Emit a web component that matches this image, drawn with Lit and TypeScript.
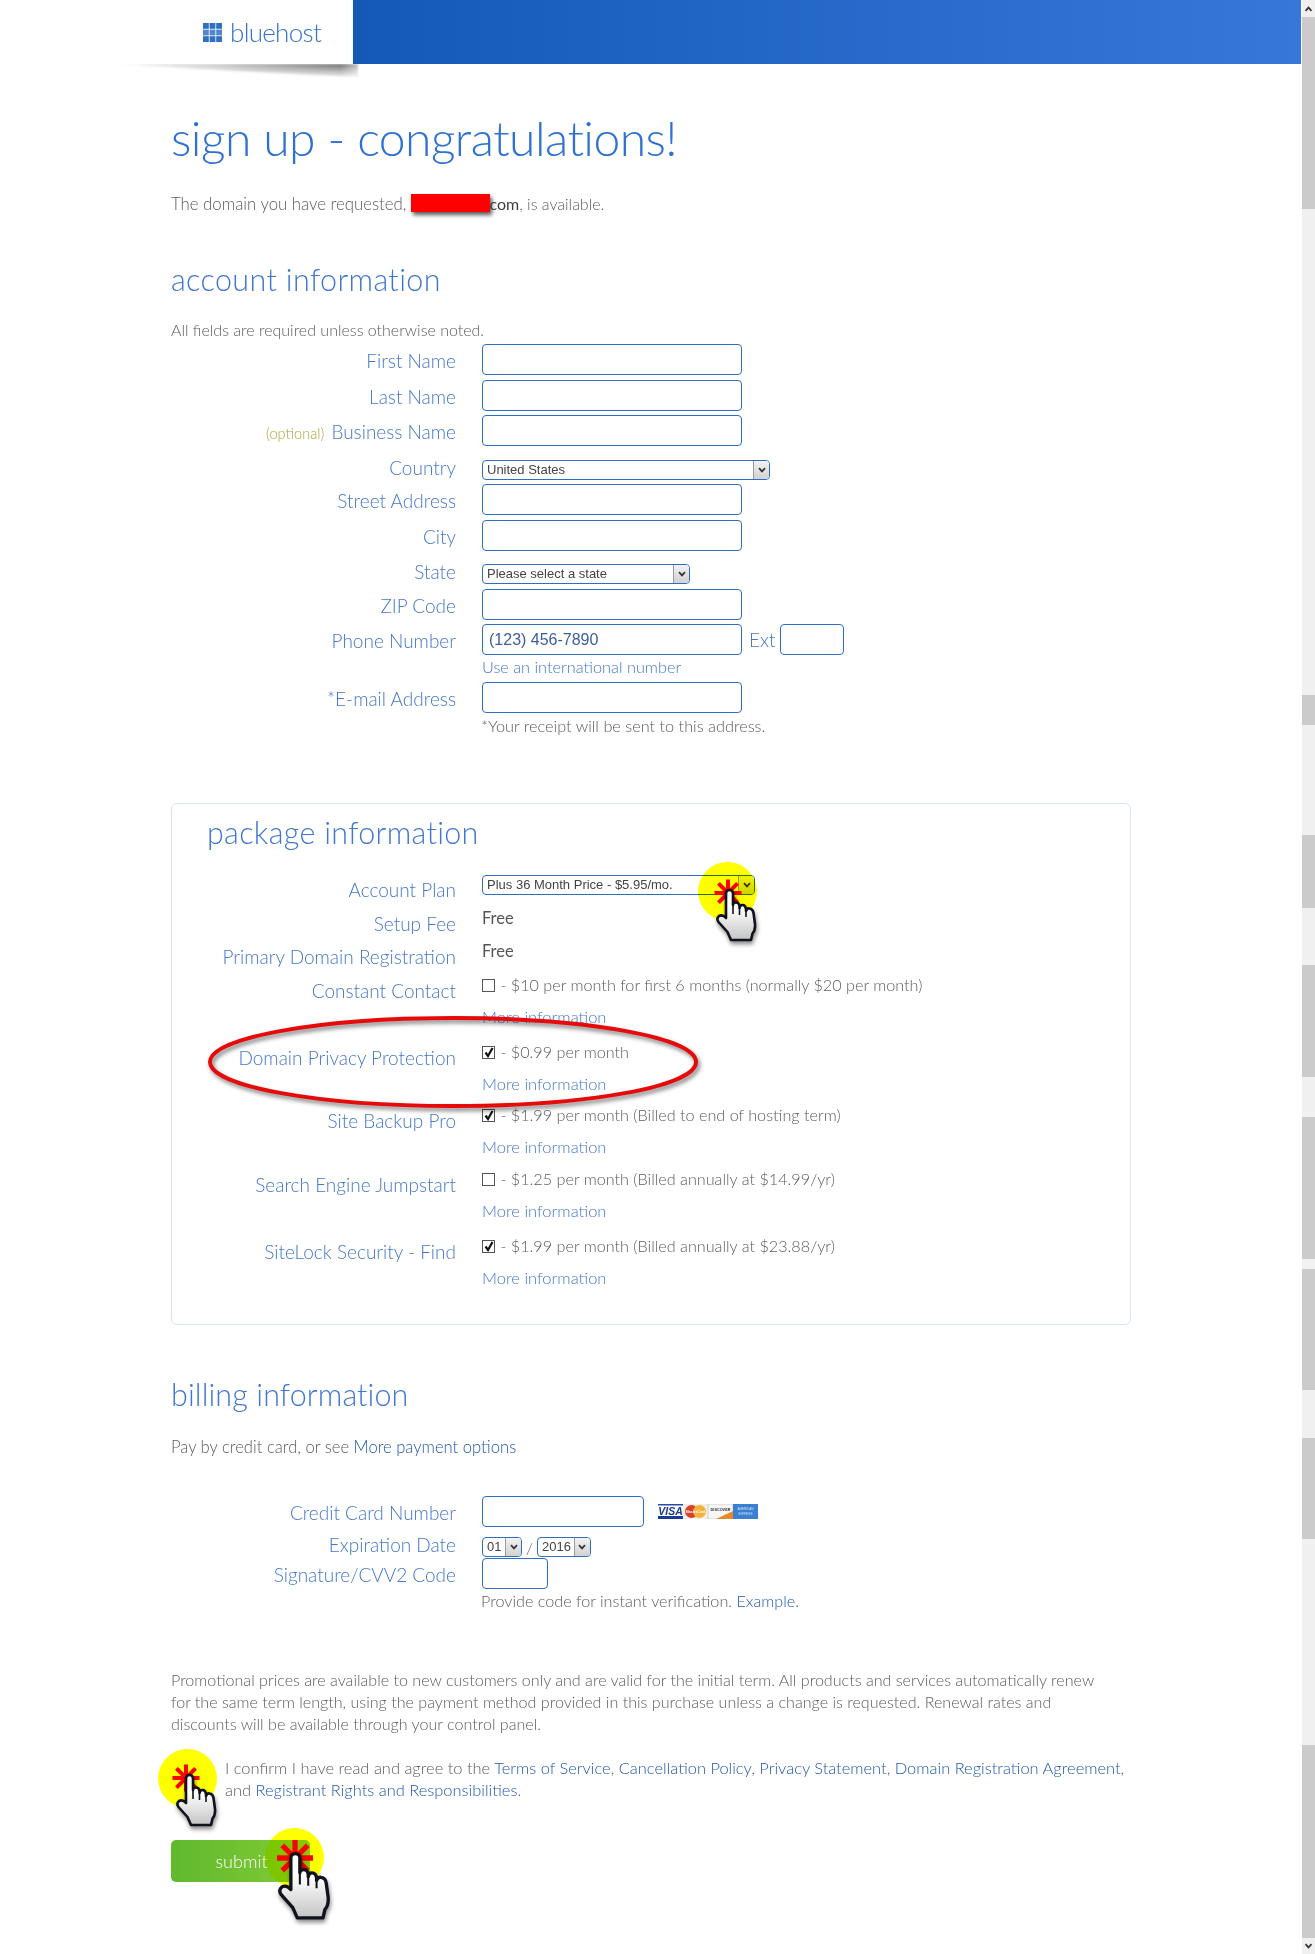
import { LitElement, html, css, svg } from "lit";
import { customElement } from "lit/decorators.js";

const SCROLL: [string, number][] = [
  ["arrow up", 17], ["thumb", 192], ["track", 486], ["thumb", 30], ["track", 110], ["thumb", 73],
  ["track", 57], ["thumb", 112], ["track", 40], ["thumb", 142], ["track", 10], ["thumb", 121],
  ["track", 48], ["thumb", 101], ["track", 206], ["thumb", 193], ["arrow down", 16],
];

const chevron = (cls = "chev") => html`<svg class=${cls} viewBox="0 0 8 6"><path d="M1 1.2 L4 4.4 L7 1.2" fill="none" stroke="#333" stroke-width="1.7"/></svg>`;

const select = (label: string, cls: string) => html`<div class="select ${cls}"><span>${label}</span><i>${chevron()}</i></div>`;

const hand = () => html`<svg class="hand" viewBox="-2 0 44 56">
  <defs><linearGradient id="hg" x1="0" y1="0" x2="0" y2="1"><stop offset="0.35" stop-color="#fff"/><stop offset="1" stop-color="#c4c4c4"/></linearGradient></defs>
  <path d="M9 27 L9 5.5 Q9 2 12.5 2 Q16 2 16 5.5 L16 17 Q16 14.5 19 14.5 Q22 14.5 22.5 18 L22.5 20 Q23 17 25.5 17 Q28.5 17 29 21 L29 23 Q30 20 32.5 20.5 Q36 21 36.5 25 L38 36 Q38.5 42 35.5 45.5 L34 52 L14 52 L10.5 44 L1.5 34 Q-1 30.5 2 28 Q5.5 26 9 30 Z" fill="url(#hg)" stroke="#10131c" stroke-width="2.6" stroke-linejoin="round"/>
  <path d="M16 17 L16 26 M22.5 20 L22.5 27 M29 23 L29 29" stroke="#10131c" stroke-width="1.6" fill="none"/>
</svg>`;

const asterisk = (cls: string) => html`<svg class="star ${cls}" viewBox="-15 -15 30 30">
  ${[0, 45, 90, 135].map((a) => svg`<line x1="-13.5" y1="0" x2="13.5" y2="0" stroke="#f00" stroke-width="4" transform="rotate(${a})"/>`)}
</svg>`;

@customElement("app-root")
export class AppRoot extends LitElement {
  static styles = css`
    :host { display: block; }
    * { box-sizing: border-box; }
    .root {
      position: relative; isolation: isolate; display: flex; width: 1315px; height: 1954px; overflow: hidden;
      background: #fff; font-family: "Lato", "Open Sans", sans-serif; font-weight: 300; color: #5c5c5c;
    }
    .page { width: 1302px; flex: none; }
    .scroll { width: 13px; flex: none; display: flex; flex-direction: column; background: #f0f0f0; }
    .track { background: #f0f0f0; }
    .thumb { background: #cbcbcb; }
    .arrow { display: flex; align-items: center; justify-content: center; }
    .arrow svg { width: 9px; height: 6px; }
    .arrow.up svg { transform: rotate(180deg); }

    .topbar { display: flex; height: 64px; width: 1301px; }
    .brand { width: 353px; display: flex; align-items: center; padding: 0 0 0 203px; gap: 8px; }
    .brand svg { width: 19px; height: 19px; flex: none; margin-top: 1px; }
    .brand span { font-size: 26px; letter-spacing: -0.7px; color: #3673c6; line-height: 30px; }
    .band { flex: 1; background: linear-gradient(90deg, #1559b7, #3678da); }

    .main { padding-left: 171px; width: 1131px; }
    h1 { margin: 44px 0 0; font-size: 48px; letter-spacing: -0.55px; line-height: 60px; font-weight: 300; color: #2f71d2; white-space: nowrap; }
    h2 { margin: 0; font-size: 30.5px; letter-spacing: 0.1px; line-height: 40px; font-weight: 300; color: #4077d1; white-space: nowrap; }
    p { margin: 0; font-size: 16px; line-height: 22px; color: #5c5c5c; white-space: nowrap; }
    a { color: #1f58ae; text-decoration: none; }
    .avail { margin-top: 25px; font-size: 16.8px; }
    .avail .tail { font-size: 16px; }
    .redact { display: inline-block; width: 79px; height: 18px; background: #f00; box-shadow: 2px 3px 4px rgba(0,0,0,.65); vertical-align: -2px; margin-left: 4px; }
    .dark { color: #3e3e3e; font-weight: 400; font-size: 16px; }
    .acct { margin-top: 44px; letter-spacing: 0.35px; }
    .allreq { margin-top: 20px; }

    .row { display: grid; grid-template-columns: 285px 1fr; column-gap: 26px; }
    .lab { font-size: 19px; height: 31px; line-height: 31px; padding-top: 1px; text-align: right; color: #4477cc; white-space: nowrap; }
    .row.sel .lab { height: auto; line-height: 20px; padding: 0; margin-top: -2px; }
    .opt { font-size: 14.6px; color: #aaa63a; margin-right: 2px; }
    .val { display: flex; align-items: center; gap: 5px; min-width: 0; }
    .mt1 { margin-top: 1px; } .mt3 { margin-top: 3px; } .mt4 { margin-top: 4px; } .mt5 { margin-top: 5px; } .mt10 { margin-top: 10px; } .mt13 { margin-top: 13px; } .mt14 { margin-top: 14px; } .mt38 { margin-top: 38px; }

    input[type="text"] {
      display: block; height: 31px; width: 260px; border: 1px solid #2c6fc0; border-radius: 4px; background: #fff; outline: none; padding: 0 6px;
      font: 16px "Liberation Sans", Arial, sans-serif; color: #3d5d9c;
    }
    input.ext { width: 64px; }
    input.cc { width: 162px; }
    input.cvv { width: 66px; }
    .ext-l { font-size: 19px; color: #4477cc; padding-left: 2px; }

    .select {
      display: flex; height: 20px; border: 1px solid #2c6fc0; border-radius: 4px; background: #fff; overflow: hidden;
      font: 13px/18px "Liberation Sans", Arial, sans-serif; color: #444; padding-left: 4px; justify-content: space-between;
    }
    .select span { white-space: nowrap; }
    .select i { width: 16px; flex: none; background: linear-gradient(#f2f2f2, #d2d2d2); border-left: 1px solid #9a9a9a; display: flex; align-items: center; justify-content: center; }
    .chev { width: 8px; height: 6px; }
    .s-country { width: 288px; } .s-state { width: 208px; } .s-plan { width: 273px; } .s-mm { width: 40px; } .s-yy { width: 54px; }

    .hint { font-size: 16.3px; line-height: 22px; }
    .hintlink { color: #4477cc; margin-top: 1px; white-space: nowrap; }
    .note { margin: 2px 0 0 -1px; }

    .box { margin-top: 66px; width: 960px; border: 1px solid #d7e6f3; border-radius: 6px; padding: 8px 0 27px; }
    .box h2 { padding-left: 35px; letter-spacing: 0.3px; }
    .box .row { grid-template-columns: 284px 1fr; }
    .first { margin-top: 23px; }
    .box .lab { height: auto; line-height: 30px; padding: 0; }
    .box .val { display: block; margin-top: -8px; font-size: 16.2px; line-height: 33px; color: #5c5c5c; white-space: nowrap; }
    .box .val.plan { margin-top: 0; }
    .h33 { height: 33px; } .h34 { height: 34px; } .h60 { height: 60px; } .h63 { height: 63px; } .h64 { height: 64px; } .h67 { height: 67px; }
    .free { color: #555; font-weight: 400; font-size: 16.5px; }
    .more { display: block; color: #4477cc; font-size: 16.5px; }
    .cb { display: inline-block; width: 13px; height: 13px; border: 1px solid #555; background: #fff; vertical-align: -1px; position: relative; margin-right: 1px; }
    .cb svg { position: absolute; left: 1px; top: 0; width: 10px; height: 11px; display: none; }
    .cb.on svg { display: block; }

    .bill { margin-top: 49px; }
    .pay { margin-top: 22px; font-size: 16.6px; }
    .cards { display: block; width: 100px; height: 15px; margin-left: 9px; flex: none; }
    .slash { font-size: 16px; margin: 0 4px; color: #666; }
    .val.tight { gap: 0; }
    .prov { margin: 1px 0 0 -1px; font-size: 16.2px; }
    .promo { margin-top: 57px; font-size: 16.1px; }
    .confirm { margin: 22px 0 0 54px; font-size: 16.45px; }
    .submit {
      display: block; margin-top: 39px; width: 139px; height: 42px; border: 0; border-radius: 5px; padding: 0 0 0 2px;
      background: linear-gradient(90deg, #5fb92e, #85cb35); color: #fff; font: 300 18px/42px "Lato", sans-serif;
    }

    .tabshadow { position: absolute; left: 110px; top: 64px; width: 250px; height: 16px; }
    .ring { position: absolute; left: 200px; top: 1010px; width: 510px; height: 105px; filter: drop-shadow(2px 3px 2px rgba(0,0,0,.5)); }
    .spot { position: absolute; width: 59px; height: 59px; border-radius: 50%; background: #ff0; mix-blend-mode: multiply; }
    .star { position: absolute; width: 30px; height: 30px; }
    .hand { position: absolute; width: 44px; height: 56px; filter: drop-shadow(1px 3px 2px rgba(0,0,0,.45)); }
    .m1.spot { left: 698px; top: 862px; } .m1.star { left: 713px; top: 878px; } .m1.mark .hand { left: 715px; top: 888px; }
    .m2.spot { left: 158px; top: 1749px; } .m2.star { left: 171px; top: 1763px; } .m2.mark .hand { left: 175px; top: 1773px; }
    .m3.spot { left: 265px; top: 1828px; } .m3.star { left: 275px; top: 1838px; width: 40px; height: 40px; }
    .m3.mark .hand { left: 276px; top: 1851px; width: 58px; height: 72px; }
  `;

  private acctRow(label: unknown, mt: string) {
    return html`<div class="row ${mt}"><div class="lab">${label}</div><div class="val"><input type="text" /></div></div>`;
  }
  private selRow(label: string, cls: string, text: string, mt: string) {
    return html`<div class="row sel ${mt}"><div class="lab">${label}</div><div class="val">${select(text, cls)}</div></div>`;
  }
  private check(on: boolean) {
    return html`<span class="cb ${on ? "on" : ""}"><svg viewBox="0 0 10 11"><path d="M1.5 5.5 L4 9 L8.5 1" fill="none" stroke="#111" stroke-width="2.2"/></svg></span>`;
  }
  private pkgRow(label: string, on: boolean, text: string, h: string) {
    return html`<div class="row ${h}"><div class="lab">${label}</div><div class="val">${this.check(on)} - ${text}<a class="more">More information</a></div></div>`;
  }

  render() {
    return html`<div class="root">
      <div class="page">
        <div class="topbar">
          <div class="brand">
            <svg viewBox="0 0 19 19">
              ${[0, 1, 2].flatMap((r) => [0, 1, 2].map((c) => svg`<rect x=${c * 6.6} y=${r * 6.6} width="5.8" height="5.8" fill=${r === 1 ? "#4f88cf" : "#2f70c2"}/>`))}
            </svg>
            <span>bluehost</span>
          </div>
          <div class="band"></div>
        </div>
        <div class="main">
          <h1>sign up - congratulations!</h1>
          <p class="avail">The domain you have requested,<span class="redact"></span><span class="dark">com</span><span class="tail">, is available.</span></p>
          <h2 class="acct">account information</h2>
          <p class="allreq">All fields are required unless otherwise noted.</p>
          ${this.acctRow("First Name", "mt3")}
          ${this.acctRow("Last Name", "mt5")}
          ${this.acctRow(html`<span class="opt">(optional)</span> Business Name`, "mt4")}
          ${this.selRow("Country", "s-country", "United States", "mt14")}
          ${this.acctRow("Street Address", "mt4")}
          ${this.acctRow("City", "mt5")}
          ${this.selRow("State", "s-state", "Please select a state", "mt13")}
          ${this.acctRow("ZIP Code", "mt5")}
          <div class="row mt4">
            <div class="lab">Phone Number</div>
            <div>
              <div class="val"><input type="text" value="(123) 456-7890" /><span class="ext-l">Ext</span><input class="ext" type="text" /></div>
              <div class="hint hintlink">Use an international number</div>
            </div>
          </div>
          ${this.acctRow("*E-mail Address", "mt4")}
          <div class="row"><div></div><p class="hint note">*Your receipt will be sent to this address.</p></div>

          <div class="box">
            <h2>package information</h2>
            <div class="row h34 first"><div class="lab">Account Plan</div><div class="val plan">${select("Plus 36 Month Price - $5.95/mo.", "s-plan")}</div></div>
            <div class="row h33"><div class="lab">Setup Fee</div><div class="val"><span class="free">Free</span></div></div>
            <div class="row h34"><div class="lab">Primary Domain Registration</div><div class="val"><span class="free">Free</span></div></div>
            ${this.pkgRow("Constant Contact", false, "$10 per month for first 6 months (normally $20 per month)", "h67")}
            ${this.pkgRow("Domain Privacy Protection", true, "$0.99 per month", "h63")}
            ${this.pkgRow("Site Backup Pro", true, "$1.99 per month (Billed to end of hosting term)", "h64")}
            ${this.pkgRow("Search Engine Jumpstart", false, "$1.25 per month (Billed annually at $14.99/yr)", "h67")}
            ${this.pkgRow("SiteLock Security - Find", true, "$1.99 per month (Billed annually at $23.88/yr)", "h60")}
          </div>

          <h2 class="bill">billing information</h2>
          <p class="pay">Pay by credit card, or see <a>More payment options</a></p>
          <div class="row mt38">
            <div class="lab">Credit Card Number</div>
            <div class="val">
              <input class="cc" type="text" />
              <svg class="cards" viewBox="0 0 100 15">
                <rect width="25" height="15" fill="#fff" stroke="#c9c9d6" stroke-width=".5"/><rect y="12" width="25" height="3" fill="#1a3a9c"/><rect width="25" height="1.5" fill="#2a4aa8"/>
                <text x="12.5" y="10.8" text-anchor="middle" font-family="Liberation Sans" font-size="10.5" font-weight="700" font-style="italic" fill="#1a3a8c">VISA</text>
                <rect x="25" width="25" height="15" fill="#f4efe6"/><circle cx="33.5" cy="7.5" r="6.5" fill="#d8402a"/><circle cx="41.5" cy="7.5" r="6.5" fill="#f2b33a"/>
                <text x="37.5" y="9" text-anchor="middle" font-family="Liberation Sans" font-size="3.5" font-weight="700" fill="#fff">MasterCard</text>
                <rect x="50" width="25" height="15" fill="#f6f6f6" stroke="#bbb" stroke-width=".6"/><path d="M58 15 L75 7 L75 15 Z" fill="#e58a24"/>
                <text x="62.5" y="6.5" text-anchor="middle" font-family="Liberation Sans" font-size="3.8" font-weight="700" fill="#333">DISCOVER</text>
                <rect x="75" width="25" height="15" fill="#3b80d0"/>
                <text x="87.5" y="6" text-anchor="middle" font-family="Liberation Sans" font-size="3" fill="#cfe0f5">AMERICAN</text>
                <text x="87.5" y="11" text-anchor="middle" font-family="Liberation Sans" font-size="3" fill="#cfe0f5">EXPRESS</text>
              </svg>
            </div>
          </div>
          <div class="row sel mt10">
            <div class="lab">Expiration Date</div>
            <div class="val tight">${select("01", "s-mm")}<span class="slash">/</span>${select("2016", "s-yy")}</div>
          </div>
          <div class="row mt1"><div class="lab">Signature/CVV2 Code</div><div class="val"><input class="cvv" type="text" /></div></div>
          <div class="row"><div></div><p class="hint prov">Provide code for instant verification. <a>Example.</a></p></div>
          <p class="hint promo">Promotional prices are available to new customers only and are valid for the initial term. All products and services automatically renew<br />for the same term length, using the payment method provided in this purchase unless a change is requested. Renewal rates and<br />discounts will be available through your control panel.</p>
          <p class="hint confirm">I confirm I have read and agree to the <a>Terms of Service</a>, <a>Cancellation Policy</a>, <a>Privacy Statement</a>, <a>Domain Registration Agreement</a>,<br />and <a>Registrant Rights and Responsibilities</a>.</p>
          <button class="submit">submit</button>
        </div>
      </div>
      <div class="scroll">
        ${SCROLL.map(([kind, h]) => kind.startsWith("arrow")
          ? html`<div class="arrow ${kind.split(" ")[1]}" style="height:${h}px">${chevron("")}</div>`
          : html`<div class=${kind} style="height:${h}px"></div>`)}
      </div>

      <svg class="tabshadow" viewBox="0 0 250 16">
        <defs>
          <linearGradient id="ts" x1="0" x2="1" y1="0" y2="0"><stop offset="0" stop-color="#fff"/><stop offset=".45" stop-color="#c9c9c9"/><stop offset=".93" stop-color="#707070"/><stop offset="1" stop-color="#bbb"/></linearGradient>
          <linearGradient id="tv" x1="0" x2="0" y1="0" y2="1"><stop offset="0" stop-color="#fff" stop-opacity="0"/><stop offset=".9" stop-color="#fff" stop-opacity="1"/></linearGradient>
          <filter id="tb"><feGaussianBlur stdDeviation="0.8"/></filter>
        </defs>
        <path d="M0 0 L248 0 L248 14 Q140 8 0 0 Z" fill="url(#ts)" filter="url(#tb)"/>
        <rect x="0" y="0" width="250" height="16" fill="url(#tv)"/>
      </svg>

      <svg class="ring" viewBox="0 0 510 105"><ellipse cx="253" cy="52" rx="243" ry="44" fill="none" stroke="#e60a0a" stroke-width="4"/></svg>

      <div class="spot m1"></div>${asterisk("m1")}<div class="mark m1">${hand()}</div>
      <div class="spot m2"></div>${asterisk("m2")}<div class="mark m2">${hand()}</div>
      <div class="spot m3"></div>${asterisk("m3")}<div class="mark m3">${hand()}</div>
    </div>`;
  }
}
